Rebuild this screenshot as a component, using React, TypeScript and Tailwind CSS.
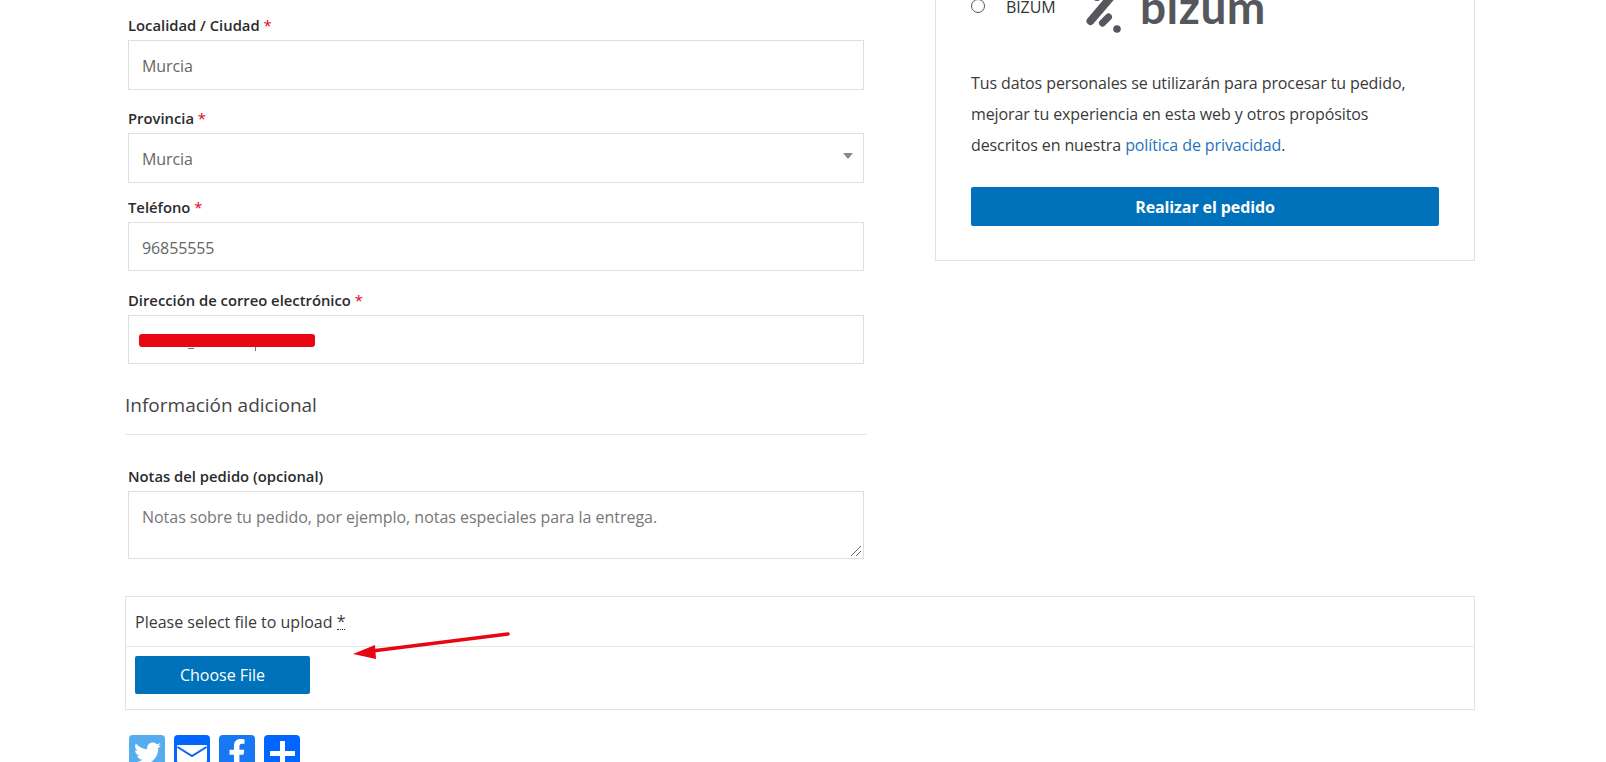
import { FaTwitter, FaFacebookF } from "react-icons/fa";

const FIELDS_FONT = "font-['Open_Sans',sans-serif]";

function Req() {
  return <span className="text-[#e2001a] font-normal"> *</span>;
}

function FieldLabel({ children, className = "" }: { children: React.ReactNode; className?: string }) {
  return (
    <label className={`block text-[14.8px] leading-[20px] font-semibold text-[#2b2b2b] ${className}`}>
      {children}
    </label>
  );
}

function TextBox({ value, h = "h-[50px]", children }: { value: string; h?: string; children?: React.ReactNode }) {
  return (
    <div className={`relative flex items-center ${h} border border-[#dedede] pl-[13px] pt-[2px] text-[16px] tracking-[-0.1px] text-[#666666]`}>
      {value}
      {children}
    </div>
  );
}

function BizumLogo() {
  return (
    <div className="flex items-start h-[34px]">
      <svg width="45" height="34" viewBox="0 0 45 34" className="shrink-0">
        <g stroke="#55575c" strokeLinecap="round" fill="none">
          <path d="M5.5 21 L26 -3" strokeWidth="8" />
          <path d="M17.5 23 L23.5 17" strokeWidth="7" />
        </g>
        <circle cx="12" cy="-3" r="4" fill="#55575c" />
        <circle cx="32" cy="29" r="3.8" fill="#55575c" />
      </svg>
      <span className="ml-[10px] -mt-[10px] text-[46px] leading-[34px] font-bold tracking-[0.5px] text-[#55575c] font-['Lato',sans-serif]">
        bizum
      </span>
    </div>
  );
}

export default function App() {
  return (
    <div className={`h-[762px] w-[1606px] overflow-hidden bg-white ${FIELDS_FONT}`}>
      <div className="pl-[125px] w-[1475px]">
        <div className="flex justify-between">
          <div className="w-[742px]">
            <div className="pl-[3px] pr-[3px] pt-[15px]">
              <FieldLabel>Localidad / Ciudad<Req /></FieldLabel>
              <div className="mt-[5px]"><TextBox value="Murcia" /></div>
              <FieldLabel className="mt-[18px]">Provincia<Req /></FieldLabel>
              <div className="mt-[5px]">
                <TextBox value="Murcia">
                  <span className="absolute right-[10px] top-[19px] border-x-[5px] border-t-[6px] border-x-transparent border-t-[#888888]" />
                </TextBox>
              </div>
              <FieldLabel className="mt-[14px]">Teléfono<Req /></FieldLabel>
              <div className="mt-[5px]"><TextBox value="96855555" h="h-[49px]" /></div>
              <FieldLabel className="mt-[19px]">Dirección de correo electrónico<Req /></FieldLabel>
              <div className="mt-[5px]">
                <TextBox value="" h="h-[49px]">
                  <span className="absolute left-[10px] top-[18px] h-[13px] w-[176px] rounded-[3px] bg-[#e90613]" />
                  <span className="absolute left-[59px] top-[32px] h-px w-[6px] bg-[#777777]" />
                  <span className="absolute left-[126px] top-[31px] h-[4px] w-px bg-[#777777]" />
                </TextBox>
              </div>
            </div>
            <h3 className="mt-[27px] border-b border-[#e6e6e6] pb-[14px] text-[19px] leading-[29px] text-[#444444]">
              Información adicional
            </h3>
            <div className="pl-[3px] pr-[3px] pt-[31px]">
              <FieldLabel>Notas del pedido (opcional)</FieldLabel>
              <div className="mt-[5px] h-[68px] border border-[#dedede] pl-[13px] pt-[14px] text-[16px] tracking-[-0.03px] leading-[22px] text-[#777777] relative">
                Notas sobre tu pedido, por ejemplo, notas especiales para la entrega.
                <svg width="12" height="12" viewBox="0 0 12 12" className="absolute right-px bottom-px">
                  <path d="M11 1 L1 11 M11 6 L6 11" stroke="#666" strokeWidth="1" />
                </svg>
              </div>
            </div>
          </div>

          <div className="w-[540px] h-[261px] border-x border-b border-[#e2e2e2] pl-[35px] pr-[35px] text-[16px] tracking-[-0.1px]">
            <div className="flex items-end -mt-[6px] h-[40px]">
              <span className="shrink-0 w-[14px] h-[14px] rounded-full border border-[#555555] mb-[21px]" />
              <span className="ml-[21px] mb-[15px] w-[50px] text-[#333333]">BIZUM</span>
              <div className="ml-[29px]"><BizumLogo /></div>
            </div>
            <p className="mt-[34px] leading-[31px] text-[#3a3a3a]">
              Tus datos personales se utilizarán para procesar tu pedido,
              <br />
              mejorar tu experiencia en esta web y otros propósitos
              <br />
              descritos en nuestra <a className="text-[#1e73be]">política de privacidad</a>.
            </p>
            <button className="mt-[26px] block w-full h-[39px] rounded-[2px] bg-[#0071bb] font-bold text-white">
              Realizar el pedido
            </button>
          </div>
        </div>

        <div className="relative mt-[37px] w-[1350px] border border-[#e2e2e2] text-[16px]">
          <div className="h-[50px] border-b border-[#e6e6e6] pl-[9px] flex items-center text-[#3a3a3a]">
            Please select file to upload&nbsp;<abbr className="no-underline border-b border-dotted border-[#333] leading-[16px]">*</abbr>
          </div>
          <div className="h-[62px] pl-[9px] pt-[9px]">
            <button className="h-[38px] w-[175px] rounded-[2px] bg-[#0071bb] text-white">
              Choose File
            </button>
          </div>
          <svg width="170" height="40" viewBox="0 0 170 40" className="absolute left-[225px] top-[30px]">
            <path d="M157 7 L21 24" stroke="#e90613" strokeWidth="3.5" strokeLinecap="round" />
            <path d="M2 27 L24 18 L25 32 Z" fill="#e90613" />
          </svg>
        </div>

        <div className="mt-[25px] pl-[4px] flex gap-[9px]">
          <span className="flex items-center justify-center w-[36px] h-[36px] rounded-[4px] bg-[#55acee] text-white">
            <FaTwitter size={27} />
          </span>
          <span className="flex items-center justify-center w-[36px] h-[36px] rounded-[4px] bg-[#0166ff]">
            <svg width="30" height="17" viewBox="0 0 30 17">
              <rect width="30" height="17" rx="1" fill="#fff" />
              <path d="M0.5 2 L15 11 L29.5 2" fill="none" stroke="#0166ff" strokeWidth="2" />
            </svg>
          </span>
          <span className="flex items-center justify-center w-[36px] h-[36px] rounded-[4px] bg-[#1877f2] text-white">
            <FaFacebookF size={28} />
          </span>
          <span className="flex items-center justify-center w-[36px] h-[36px] rounded-[4px] bg-[#0166ff]">
            <svg width="25" height="25" viewBox="0 0 25 25">
              <path d="M12.5 0 V25 M0 12.5 H25" stroke="#fff" strokeWidth="5" />
            </svg>
          </span>
        </div>
      </div>
    </div>
  );
}
